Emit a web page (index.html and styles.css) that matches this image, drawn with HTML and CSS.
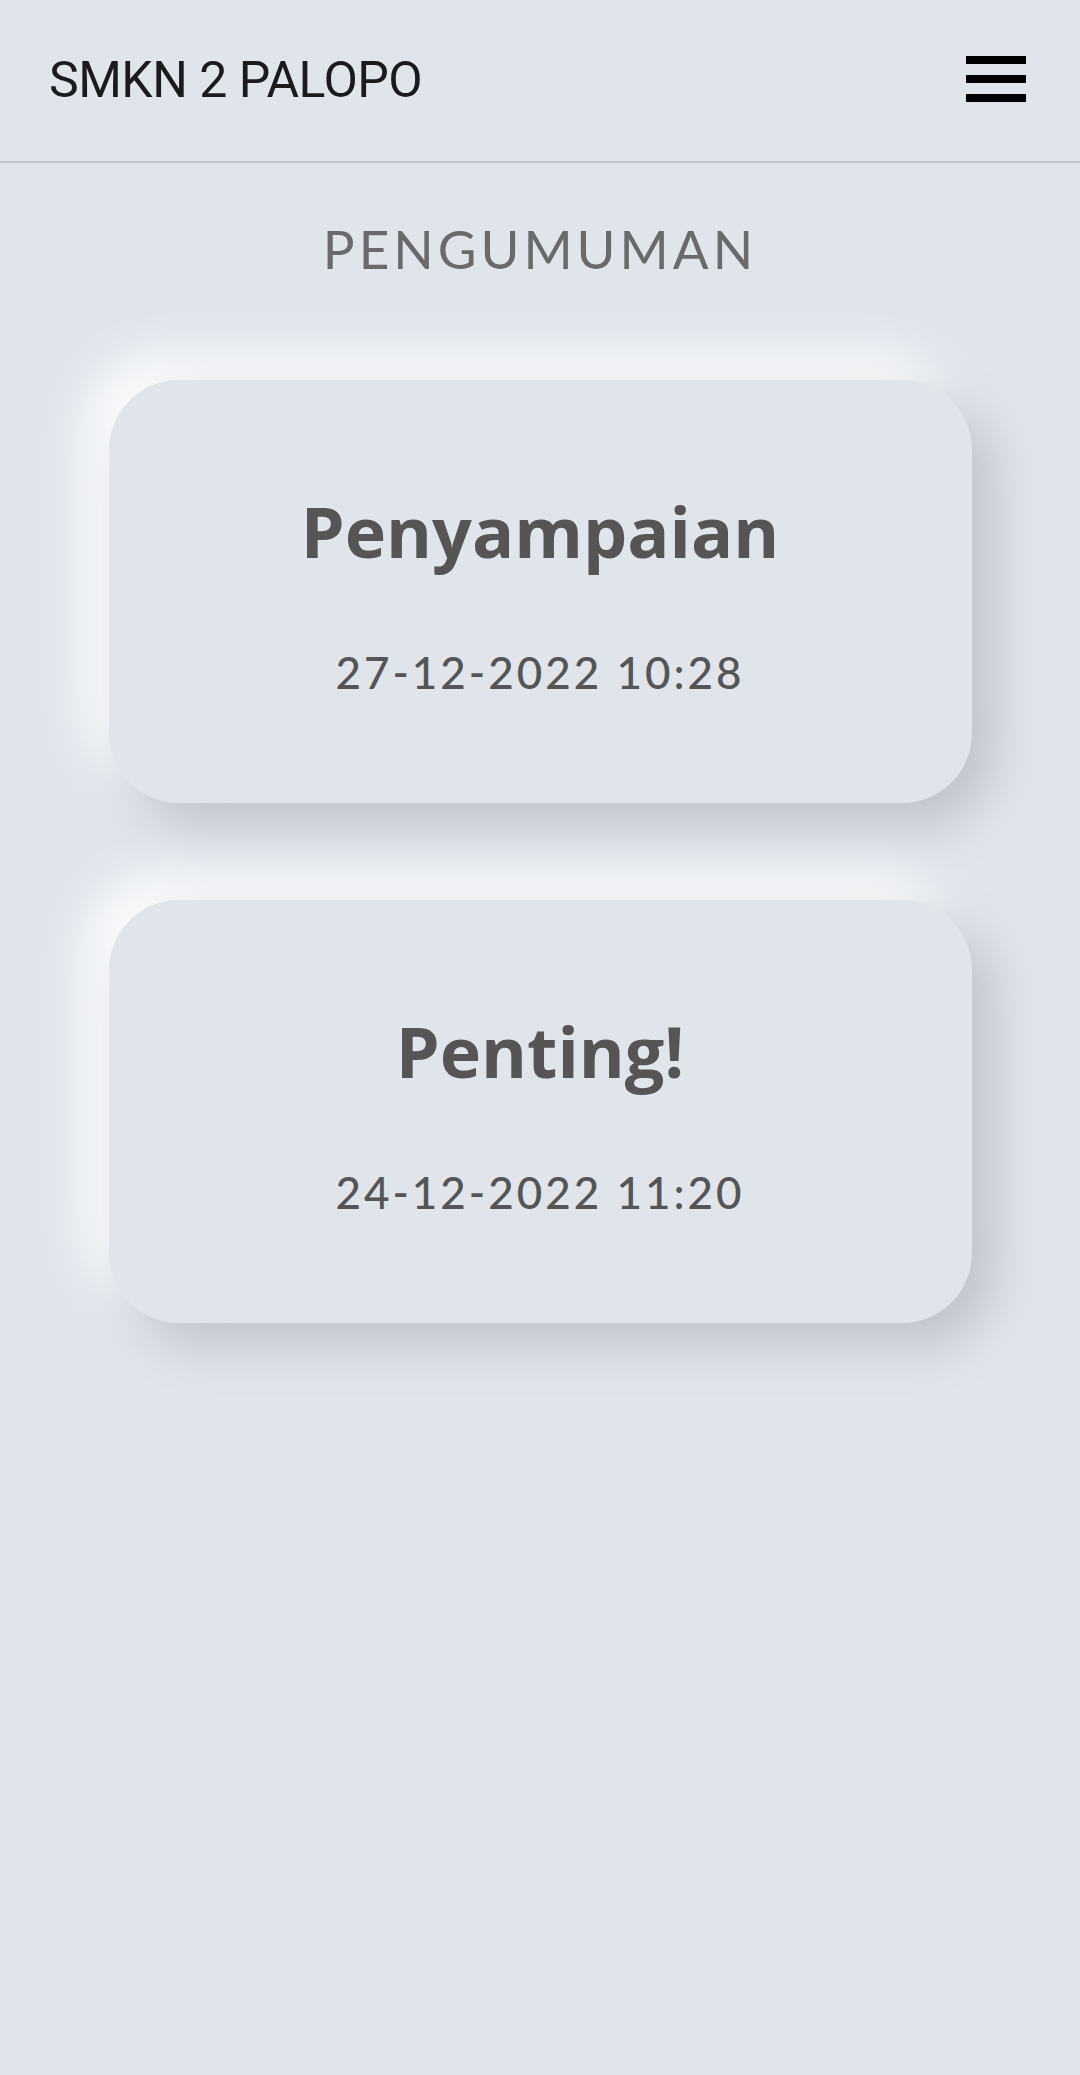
FILE: index.html
```html
<!DOCTYPE html>
<html lang="id">
<head>
<meta charset="utf-8">
<title>SMKN 2 PALOPO - Pengumuman</title>
<link rel="stylesheet" href="styles.css">
</head>
<body>
<header class="topbar">
  <div class="brand">SMKN 2 PALOPO</div>
  <button class="menu" aria-label="Menu">
    <span class="bar"></span>
    <span class="bar"></span>
    <span class="bar"></span>
  </button>
</header>
<main class="content">
  <h1 class="page-title">PENGUMUMAN</h1>
  <div class="list">
    <article class="card">
      <h2 class="card-title">Penyampaian</h2>
      <p class="card-date">27-12-2022 10:28</p>
    </article>
    <article class="card">
      <h2 class="card-title">Penting!</h2>
      <p class="card-date">24-12-2022 11:20</p>
    </article>
  </div>
</main>
</body>
</html>
```
FILE: styles.css
```css
html, body {
  margin: 0;
  padding: 0;
}
body {
  background: #e0e5ec;
  min-height: 2075px;
  font-family: "Lato", "Noto Sans", sans-serif;
}
.topbar {
  height: 163px;
  box-sizing: border-box;
  display: flex;
  align-items: center;
  justify-content: space-between;
  padding: 0 54px 0 49px;
  border-bottom: 2px solid #c6c8cc;
}
.brand {
  font-family: "Roboto", sans-serif;
  font-size: 50px;
  color: #1b1b1f;
  letter-spacing: -0.5px;
  margin-top: -2px;
}
.menu {
  width: 60px;
  height: 46px;
  padding: 0;
  border: 0;
  background: transparent;
  display: flex;
  flex-direction: column;
  justify-content: space-between;
  margin-top: -3px;
}
.bar {
  display: block;
  width: 60px;
  height: 8px;
  background: #000;
}
.content {
  display: flex;
  flex-direction: column;
  align-items: center;
}
.page-title {
  margin: 51px 0 0;
  font-family: "Lato", sans-serif;
  font-weight: 400;
  font-size: 53px;
  letter-spacing: 4px;
  color: #6a6a6c;
  line-height: 70px;
}
.list {
  margin-top: 96px;
  display: flex;
  flex-direction: column;
  gap: 97px;
}
.card {
  width: 863px;
  height: 423px;
  box-sizing: border-box;
  border-radius: 70px;
  background: #e0e5ec;
  box-shadow: 22px 22px 50px #bec3cb, -22px -22px 50px #ffffff;
  display: flex;
  flex-direction: column;
  align-items: center;
  padding-top: 111px;
}
.card-title {
  margin: 0;
  font-family: "Open Sans", sans-serif;
  font-weight: 700;
  font-size: 70px;
  line-height: 80px;
  color: #555556;
}
.card-date {
  margin: 76px 0 0;
  font-family: "Lato", sans-serif;
  font-weight: 500;
  font-size: 44px;
  line-height: 50px;
  letter-spacing: 3px;
  color: #555556;
}
```
